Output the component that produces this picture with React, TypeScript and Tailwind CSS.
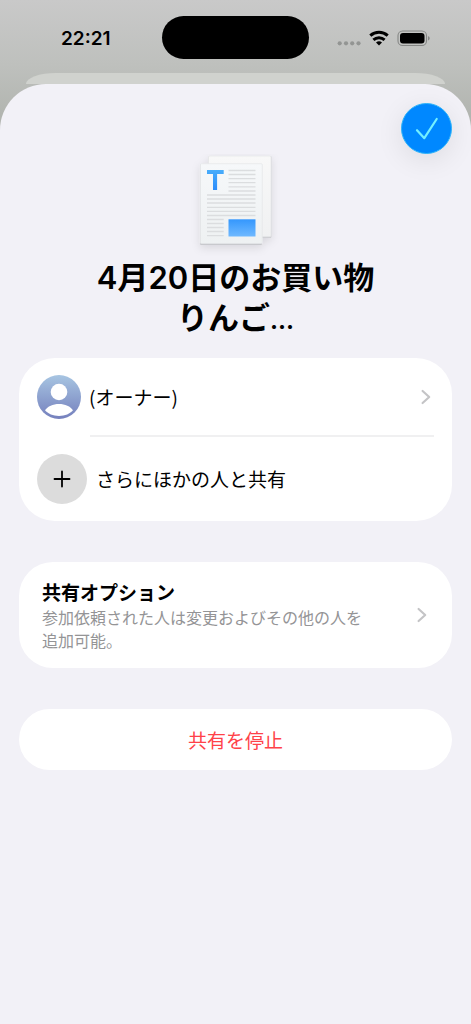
import React from 'react';

function StatusIcons() {
  return (
    <svg className="h-6 w-24" viewBox="0 0 96 24" aria-hidden="true">
      <g fill="#939593">
        <circle cx="4.7" cy="17.3" r="2.1" />
        <circle cx="11" cy="17.3" r="2.1" />
        <circle cx="17.2" cy="17.3" r="2.1" />
        <circle cx="23.5" cy="17.3" r="2.1" />
      </g>
      <g fill="none" stroke="#000" strokeWidth="3">
        <path d="M35.3 9.700a13 13 0 0 1 17.400 0" />
        <path d="M38.400 13.900a8.400 8.400 0 0 1 11.200 0" />
      </g>
      <path d="M44 19.600l-3-3a4.400 4.400 0 0 1 6 0z" fill="#000" />
      <rect x="63" y="5" width="28.500" height="14.500" rx="4.600" fill="none" stroke="#858785" strokeWidth="1.100" />
      <rect x="65" y="7" width="24.500" height="10.500" rx="3" fill="#000" />
      <path d="M93 10.200v4.200c1.300-.4 1.700-1.200 1.700-2.100s-.4-1.700-1.700-2.100z" fill="#858785" />
    </svg>
  );
}

function DocumentIcon() {
  return (
    <svg className="h-[104px] w-[110px]" viewBox="181 154 110 104" aria-hidden="true">
      <defs>
        <linearGradient id="page" x1="0" y1="0" x2="0" y2="1">
          <stop offset="0" stopColor="#f6f8fa" />
          <stop offset="1" stopColor="#eef1f2" />
        </linearGradient>
        <linearGradient id="back" x1="0" y1="0" x2="0" y2="1">
          <stop offset="0" stopColor="#f8f8f8" />
          <stop offset="1" stopColor="#f0f1f2" />
        </linearGradient>
        <linearGradient id="blue" x1="0" y1="0" x2="0" y2="1">
          <stop offset="0" stopColor="#3497fd" />
          <stop offset="1" stopColor="#6fb9ff" />
        </linearGradient>
        <linearGradient id="letter" x1="0" y1="0" x2="0" y2="1">
          <stop offset="0" stopColor="#48adfb" />
          <stop offset="1" stopColor="#2b8cfb" />
        </linearGradient>
        <filter id="soft" x="-30%" y="-30%" width="160%" height="160%">
          <feDropShadow dx="0" dy="3" stdDeviation="4" floodColor="#000" floodOpacity=".11" />
        </filter>
      </defs>
      <g filter="url(#soft)">
        <rect x="208.500" y="156" width="63" height="82" rx="1" fill="#cfd0d4" />
        <rect x="208.500" y="156" width="62.500" height="80.500" rx="1" fill="url(#back)" stroke="#e5e6e8" strokeWidth=".7" />
        <rect x="200" y="164" width="62" height="81" rx="1" fill="#c8c9cd" />
        <rect x="200.300" y="163.700" width="62" height="79.800" rx="1" fill="url(#page)" stroke="#e4e5e8" strokeWidth=".7" />
      </g>
      <path d="M207 170h16.700v4h-6.600v16h-4.100v-16h-6z" fill="url(#letter)" />
      <path
        d="M228.500 170.500h27M228.500 174.500h27M228.500 178.700h27M228.500 182.700h27M228.500 186.800h27M228.500 191h27M207 195h48.500M207 199h48.500M207 203h48.500M207 207.300h48.500M207 211.300h48.500M207 215.500h48.500M207 219.500h16.700M207 223.500h16.700M207 227.500h16.700M207 231.500h16.700M207 235.700h16.700"
        stroke="#dbdddf"
        strokeWidth="1.300"
      />
      <rect x="228.500" y="219.300" width="27" height="17.200" fill="url(#blue)" />
    </svg>
  );
}

function Chevron() {
  return (
    <svg className="h-4 w-3 shrink-0" viewBox="0 0 12 16" fill="none" aria-hidden="true">
      <path d="M2.600 2l6.600 6-6.600 6" stroke="#c4c4c6" strokeWidth="2.200" strokeLinecap="round" strokeLinejoin="round" />
    </svg>
  );
}

function Avatar() {
  return (
    <svg className="size-11 shrink-0" viewBox="0 0 44 44" aria-hidden="true">
      <defs>
        <linearGradient id="avatar" x1="0" y1="0" x2="0" y2="1">
          <stop offset="0" stopColor="#a7c5e2" />
          <stop offset="1" stopColor="#7580bd" />
        </linearGradient>
      </defs>
      <circle cx="22" cy="22" r="22" fill="url(#avatar)" />
      <circle cx="22" cy="17" r="8.300" fill="#fff" />
      <path d="M8 35.300C10.500 31.300 16 29 22 29s11.500 2.300 14 6.300C33 38.800 28 41 22 41S11 38.800 8 35.300z" fill="#fff" />
    </svg>
  );
}

export default function App() {
  return (
    <div className="flex min-h-screen flex-col bg-[linear-gradient(180deg,#c9c9c9_0px,#bec0bd_65px,#b2b5b0_115px)] font-['Inter','Noto_Sans_CJK_JP',sans-serif] text-black">
      <header className="grid h-[73px] grid-cols-[1fr_auto_1fr] pt-4">
        <time className="mt-[9px] pl-[61px] text-[19px] leading-7 font-semibold">22:21</time>
        <div className="h-[43px] w-[147px] rounded-full bg-black" />
        <div className="mt-[10px] flex justify-end pr-10">
          <StatusIcons />
        </div>
      </header>

      <div className="mx-[26px] h-[11px] rounded-t-[38px_14px] bg-[#d0d2ce]" />

      <main className="flex flex-1 flex-col rounded-t-[46px] bg-[#f2f1f7] px-[19px] pt-[19px]">
        <div className="flex justify-end">
          <button
            type="button"
            aria-label="完了"
            className="flex size-[51px] items-center justify-center rounded-full border border-[#2cb4fa] bg-[#0088ff] shadow-[0_6px_28px_rgba(0,0,0,0.09)]"
          >
            <svg className="h-6 w-6" viewBox="0 0 24 24" fill="none" aria-hidden="true">
              <path d="M2 13.200l7.300 8L21.700 2" stroke="#74f0ff" strokeWidth="2.200" strokeLinecap="round" strokeLinejoin="round" />
            </svg>
          </button>
        </div>

        <div className="flex flex-col items-center">
          <DocumentIcon />
          <h1 className="text-center text-[31px] leading-10 font-semibold">
            4月20日のお買い物
            <br />
            りんご<span className="text-2xl leading-none font-bold">...</span>
          </h1>
        </div>

        <section className="mt-5 rounded-[36px] bg-white">
          <button type="button" className="flex h-[78px] w-full items-center gap-2 pr-5 pl-[18px] text-left">
            <Avatar />
            <span className="flex-1 font-['Noto_Sans_CJK_JP',sans-serif] text-[19px] leading-6">(オーナー)</span>
            <Chevron />
          </button>
          <hr className="mr-[18px] -mt-px ml-[71px] border-t-2 border-[#f0f0f1]" />
          <button type="button" className="flex h-[84px] w-full items-center gap-[9px] pl-[18px] text-left">
            <span className="flex size-[50px] shrink-0 items-center justify-center rounded-full bg-[#dcdcdc]">
              <svg className="size-[18px]" viewBox="0 0 18 18" aria-hidden="true">
                <path d="M9 1.500v15M1.500 9h15" stroke="#000" strokeWidth="1.800" strokeLinecap="round" />
              </svg>
            </span>
            <span className="font-['Noto_Sans_CJK_JP',sans-serif] text-[19px] leading-6">さらにほかの人と共有</span>
          </button>
        </section>

        <button type="button" className="mt-[41px] flex h-[106px] w-full items-center rounded-[34px] bg-white pr-6 pl-[23px] text-left">
          <span className="flex-1 font-['Noto_Sans_CJK_JP',sans-serif]">
            <span className="block text-[19px] leading-7 font-bold">共有オプション</span>
            <span className="block text-base leading-[23px] text-[#949496]">
              参加依頼された人は変更およびその他の人を
              <br />
              追加可能。
            </span>
          </span>
          <Chevron />
        </button>

        <button
          type="button"
          className="mt-[41px] h-[61px] w-full rounded-full bg-white font-['Noto_Sans_CJK_JP',sans-serif] text-[19px] leading-7 text-[#ff4249]"
        >
          共有を停止
        </button>
      </main>
    </div>
  );
}
